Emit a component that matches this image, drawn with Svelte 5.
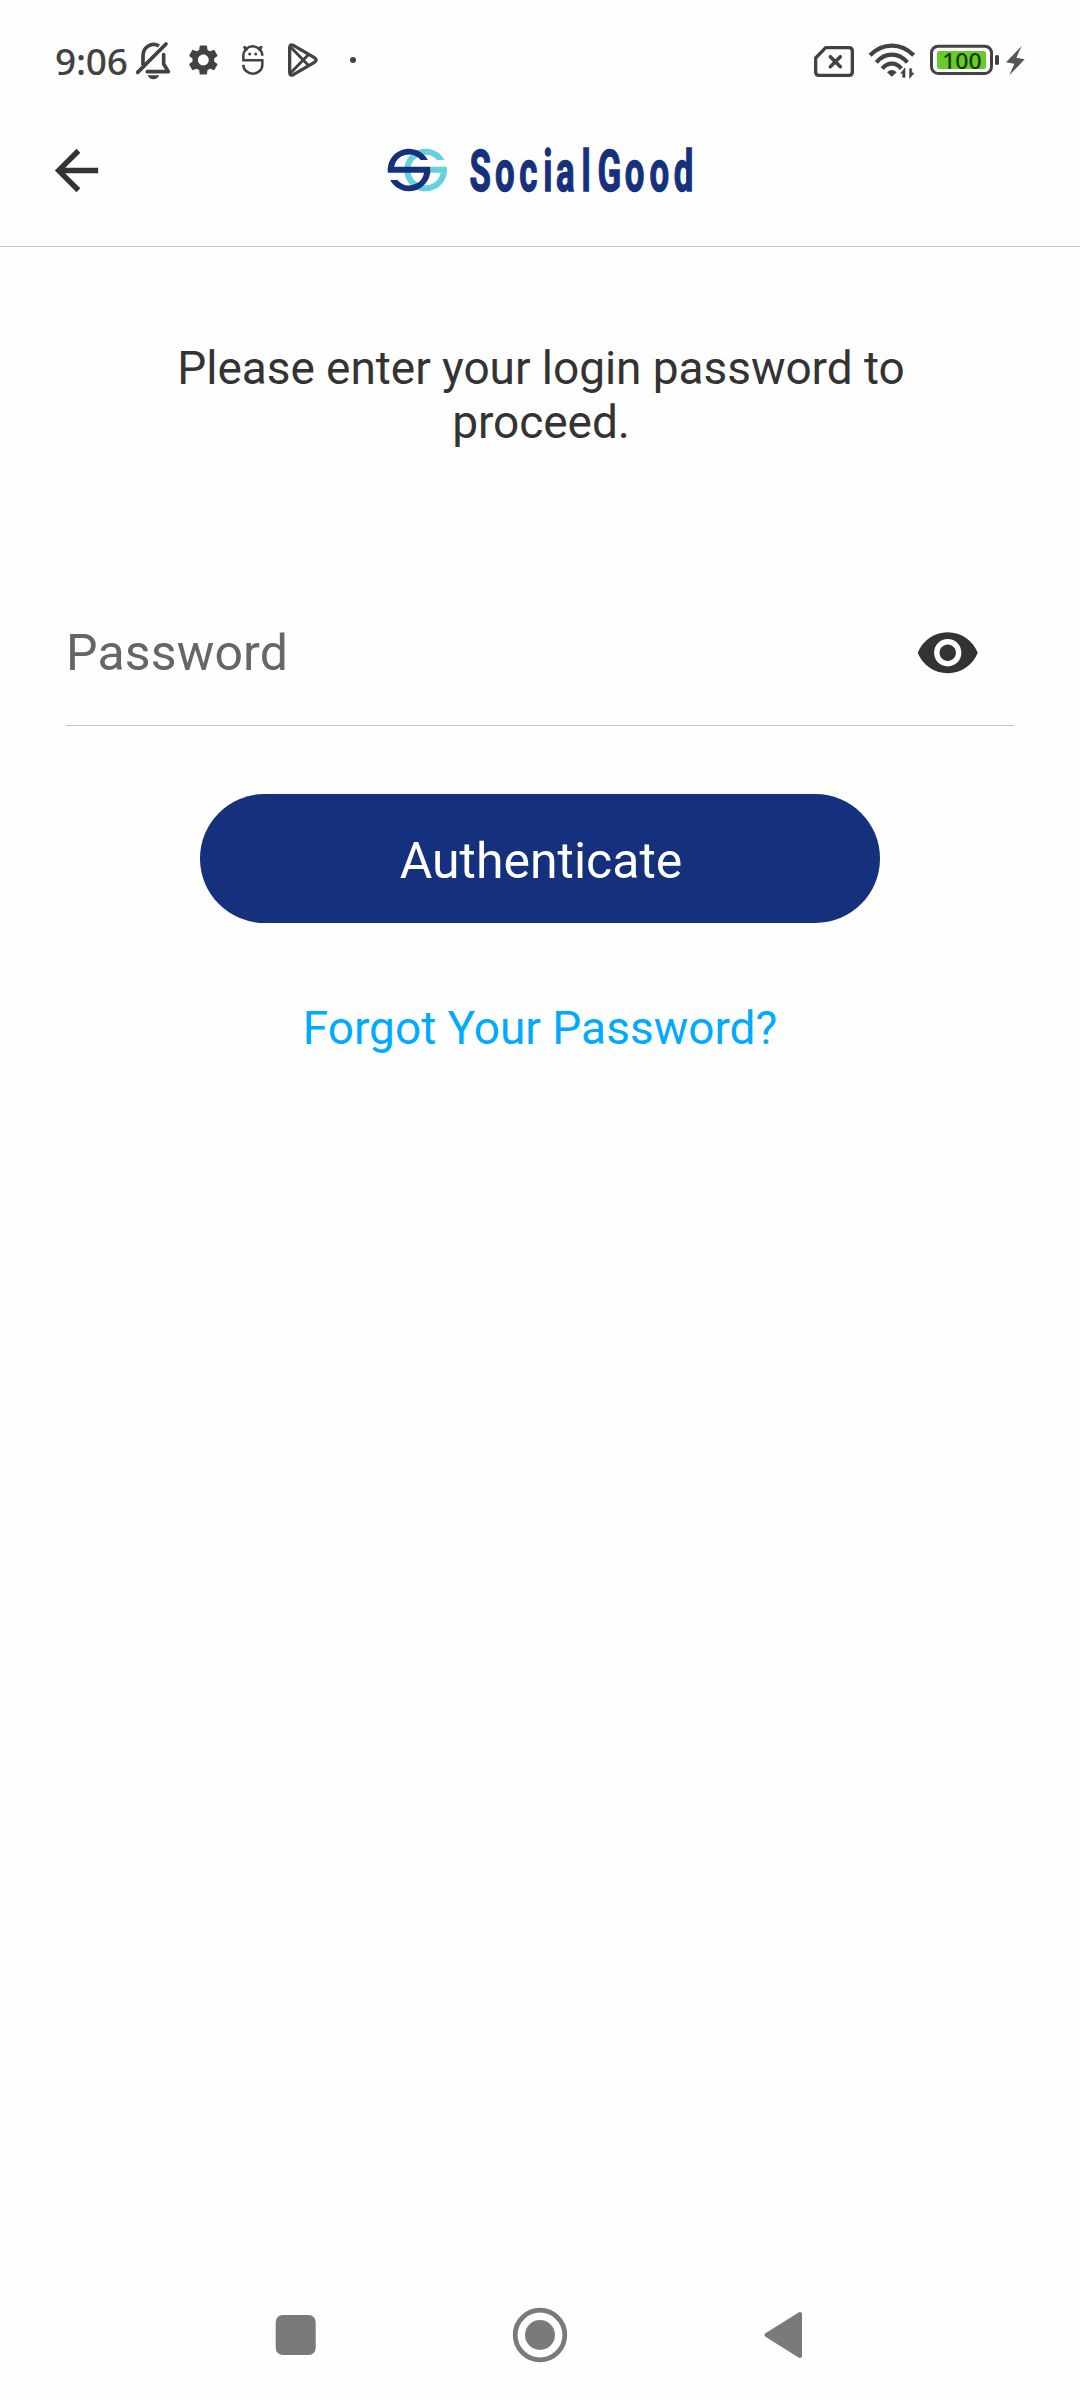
<script>
  let password = $state('');
  let visible = $state(false);
</script>

<div class="screen">
  <div class="status">
    <div class="side">
      <span class="time">9:06</span>
      <svg class="bell" viewBox="285 0 111 180" width="37" height="60">
        <g fill="none" stroke="#424242" stroke-width="11">
          <path d="M309 106V78A32 34 0 0 1 357 48" />
          <path d="M371 74V102L385 125H322" stroke-linejoin="round" stroke-linecap="round" />
          <path d="M293 127L378 42" stroke-linecap="round" />
        </g>
        <path d="M323 136H358Q352 148 340 148T323 136Z" fill="#424242" />
      </svg>
      <svg class="gear" viewBox="441 0 99 180" width="33" height="60">
        <path transform="translate(435.5 35.5) scale(4.54)" fill="#424242" d="M19.14 12.94c.04-.3.06-.61.06-.94 0-.32-.02-.64-.07-.94l2.03-1.58c.18-.14.23-.41.12-.61l-1.92-3.32c-.12-.22-.37-.29-.59-.22l-2.39.96c-.5-.38-1.03-.7-1.62-.94l-.36-2.54c-.04-.24-.24-.41-.48-.41h-3.84c-.24 0-.43.17-.47.41l-.36 2.54c-.59.24-1.13.57-1.62.94l-2.39-.96c-.22-.08-.47 0-.59.22L2.74 8.87c-.12.21-.08.47.12.61l2.03 1.58c-.05.3-.09.63-.09.94s.02.64.07.94l-2.03 1.58c-.18.14-.23.41-.12.61l1.92 3.32c.12.22.37.29.59.22l2.39-.96c.5.38 1.03.7 1.62.94l.36 2.54c.05.24.24.41.48.41h3.84c.24 0 .44-.17.47-.41l.36-2.54c.59-.24 1.13-.56 1.62-.94l2.39.96c.22.08.47 0 .59-.22l1.92-3.32c.12-.22.07-.47-.12-.61l-2.01-1.58zM12 15.6c-1.98 0-3.6-1.62-3.6-3.6s1.62-3.6 3.6-3.6 3.6 1.62 3.6 3.6-1.62 3.6-3.6 3.6z" />
      </svg>
      <svg class="mascot" viewBox="90 0 81 180" width="27" height="60">
        <path d="M157 77A28.500 28 0 0 0 100 77V91H157V104A28.500 27 0 0 1 100 104" fill="none" stroke="#424242" stroke-width="7.500" />
        <path d="M104 52L109 58M153 52L148 58" stroke="#424242" stroke-width="9" stroke-linecap="round" />
        <circle cx="119" cy="72" r="4.500" fill="#424242" />
        <circle cx="137" cy="72" r="4.500" fill="#424242" />
      </svg>
      <svg class="play" viewBox="225 0 105 180" width="35" height="60">
        <g fill="none" stroke="#424242" stroke-width="10" stroke-linejoin="round">
          <path d="M239 54Q239 41 250 46L312 82Q325 90 312 98L250 134Q239 139 239 126Z" />
          <path d="M241 50L297 108M241 130L297 72" stroke-width="8.500" />
        </g>
      </svg>
      <svg class="dot" viewBox="411 0 36 180" width="12" height="60">
        <circle cx="429" cy="90" r="9" fill="#424242" />
      </svg>
    </div>
    <div class="side">
      <svg viewBox="36 0 132 180" width="44" height="60">
        <path d="M77 53H147Q157 53 157 63V126Q157 136 147 136H57Q47 136 47 126V84Z" fill="none" stroke="#424242" stroke-width="10" stroke-linejoin="round" />
        <path d="M91 80L121 110M121 80L91 110" stroke="#424242" stroke-width="10.500" stroke-linecap="round" />
      </svg>
      <svg class="wifi" viewBox="201 0 150 180" width="50" height="60">
        <g fill="none" stroke="#424242" stroke-width="12.500">
          <path d="M210 76Q239 47 275.500 47T341 76" />
          <path d="M229 97Q249 74 275.500 74T322 97" />
          <path d="M247 116Q259 101 275.500 101T304 116" />
        </g>
        <path d="M261 127Q275 113 290 127L275.500 140Z" fill="#424242" />
        <path d="M315 114V142H308V130H302ZM329 145V116H335V129H342Z" fill="#424242" stroke="#424242" stroke-width="2" />
      </svg>
      <svg class="battery" viewBox="384 0 216 180" width="72" height="60">
        <rect x="394.500" y="48.500" width="180" height="82" rx="20" fill="none" stroke="#424242" stroke-width="9" />
        <rect x="411" y="63" width="147" height="54" rx="7" fill="#67cb29" />
        <text x="486" y="117" text-anchor="middle" textLength="119" lengthAdjust="spacingAndGlyphs" class="charge">100</text>
        <rect x="585" y="75" width="12" height="30" rx="5" fill="#424242" />
      </svg>
      <svg class="bolt" viewBox="615 0 66 180" width="22" height="60">
        <path d="M665 48L618 97L643 101L628 136L674 88L649 83Z" fill="#555" />
      </svg>
    </div>
  </div>

  <header>
    <button class="back" aria-label="Back">
      <svg viewBox="0 0 24 24" width="65" height="65">
        <path d="M20 11H7.830l5.590-5.590L12 4l-8 8 8 8 1.410-1.410L7.830 13H20z" fill="#333" />
      </svg>
    </button>
    <svg viewBox="0 0 990 210" width="330" height="70">
      <path d="M208.500 75A64 64 0 1 0 215.200 95H165V113H197.300A46 46 0 1 1 187 75Z" fill="#63d1de" />
      <path d="M158.500 75A64 64 0 0 0 38.500 113H147.300A46 46 0 0 1 67 135H45.500A64 64 0 0 0 165.200 95H57A46 46 0 0 1 137 75Z" fill="#15307c" />
      <text class="wordmark" transform="scale(.6 1)" y="167" x="472 600 721 841 905 1033 1112 1249 1372 1494">SocialGood</text>
    </svg>
  </header>

  <main>
    <p>Please enter your login password to proceed.</p>
    <div class="field">
      <input type={visible ? 'text' : 'password'} placeholder="Password" bind:value={password} />
      <button class="eye" aria-label="Show password" onclick={() => (visible = !visible)}>
        <svg viewBox="0 0 24 24" width="65.500" height="65.500">
          <path fill="#333" d="M12 4.500C7 4.500 2.730 7.610 1 12c1.730 4.390 6 7.500 11 7.500s9.270-3.110 11-7.500c-1.730-4.390-6-7.500-11-7.500zM12 17c-2.760 0-5-2.240-5-5s2.240-5 5-5 5 2.240 5 5-2.240 5-5 5zm0-8c-1.660 0-3 1.340-3 3s1.340 3 3 3 3-1.340 3-3-1.340-3-3-3z" />
        </svg>
      </button>
    </div>
    <button class="submit">Authenticate</button>
    <a href="#forgot">Forgot Your Password?</a>
  </main>

  <nav>
    <svg viewBox="0 0 60 60" width="60" height="60">
      <rect x="9.700" y="10" width="40" height="40" rx="7" fill="#7a7a7a" />
    </svg>
    <svg viewBox="0 0 60 60" width="60" height="60">
      <circle cx="30" cy="30" r="24.800" fill="none" stroke="#7a7a7a" stroke-width="4.800" />
      <circle cx="30" cy="30" r="15" fill="#7a7a7a" />
    </svg>
    <svg viewBox="0 0 60 60" width="60" height="60">
      <path d="M12.500 30L46 9V51Z" fill="#7a7a7a" stroke="#7a7a7a" stroke-width="4" stroke-linejoin="round" />
    </svg>
  </nav>
</div>

<style>
  :global(body) {
    background: #fefefe;
  }
  .screen {
    width: 1080px;
    height: 2400px;
    display: flex;
    flex-direction: column;
    font-family: Roboto, sans-serif;
    color: #333;
  }
  svg {
    display: block;
    flex: none;
  }
  button {
    border: 0;
    padding: 0;
    background: none;
    font: inherit;
  }
  .status {
    height: 64px;
    padding: 30px 53px 0 55px;
    display: flex;
    justify-content: space-between;
  }
  .side {
    display: flex;
  }
  .time {
    width: 80px;
    font: 500 37px/60px 'Noto Sans', sans-serif;
    letter-spacing: -0.2px;
    color: #424242;
    padding-top: 1px;
    box-sizing: border-box;
    white-space: nowrap;
  }
  .gear { margin-left: 15px; }
  .mascot { margin-left: 20px; }
  .play { margin-left: 18px; }
  .dot { margin-left: 27px; }
  .wifi { margin-left: 11px; }
  .battery { margin-left: 11px; }
  .bolt { margin-left: 5px; }
  .charge {
    font: 500 66px 'Noto Sans', sans-serif;
    fill: #1b3a0a;
  }
  header {
    height: 152px;
    border-bottom: 1px solid #c4c4c4;
    padding: 0 44px;
    display: grid;
    grid-template-columns: 1fr auto 1fr;
    align-items: center;
  }
  .back {
    justify-self: start;
  }
  .wordmark {
    font: 700 174px Roboto, sans-serif;
    fill: #15307c;
    stroke: #15307c;
    stroke-width: 4px;
  }
  main {
    flex: 1;
    padding: 94px 66px 0;
    display: flex;
    flex-direction: column;
    align-items: center;
  }
  p {
    margin: 0;
    padding: 0 99px 0 101px;
    font-size: 46px;
    line-height: 54px;
    letter-spacing: -0.05px;
    text-align: center;
  }
  .field {
    align-self: stretch;
    margin-top: 132px;
    height: 144px;
    padding-right: 34px;
    border-bottom: 1px solid #c4c4c4;
    display: flex;
    align-items: center;
  }
  input {
    flex: 1;
    border: 0;
    outline: 0;
    padding: 0;
    background: none;
    font: 50px/60px Roboto, sans-serif;
    letter-spacing: 0.15px;
    color: #333;
  }
  input::placeholder {
    color: #666;
    opacity: 1;
  }
  .submit {
    margin-top: 68px;
    width: 680px;
    height: 129px;
    padding: 4px 0 0 2px;
    border-radius: 65px;
    background: #15307c;
    color: #fff;
    font-size: 50px;
  }
  a {
    margin-top: 78px;
    font-size: 46px;
    line-height: 54px;
    color: #00aaff;
    text-decoration: none;
  }
  nav {
    height: 130px;
    display: grid;
    grid-template-columns: repeat(3, 244px);
    justify-content: center;
    align-items: center;
    justify-items: center;
  }
</style>
